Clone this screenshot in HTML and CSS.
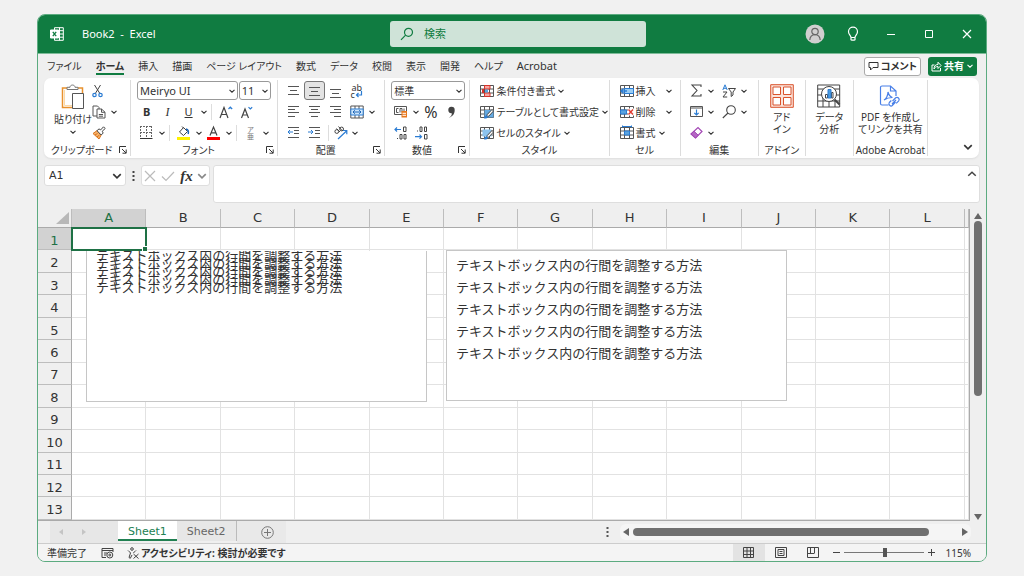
FILE: index.html
```html
<!DOCTYPE html>
<html lang="ja">
<head>
<meta charset="utf-8">
<title>Book2 - Excel</title>
<link rel="stylesheet" href="styles.css">
</head>
<body>
<svg class="defs" aria-hidden="true">
  <symbol id="chev" viewBox="0 0 8 8"><path d="M1.500 2.800 4 5.200 6.500 2.800" fill="none" stroke="currentColor" stroke-width="1.100"/></symbol>
  <symbol id="launch" viewBox="0 0 8 8"><path d="M.5 7V.5H7M3 3l4 4M7.200 3.500v3.700H3.500" fill="none" stroke="currentColor"/></symbol>
  <symbol id="cells" viewBox="0 0 14 14"><path d="M.5 1.500h13v11H.5zM.5 5h13M.5 9h13M4.500 1.500v11M9.500 1.500v11" fill="#fff" stroke="#555"/></symbol>
</svg>
<div class="window">
  <header class="titlebar">
    <div class="title">
      <svg width="14" height="14" viewBox="0 0 14 14" fill="none" stroke="#fff"><path d="M4.500 3V.7h8.800v12.600H4.500V11M8.500 3.700h4.800M8.500 7h4.800M8.500 10.200h4.800M9.500.7v12.600"/><path d="M.5 3h8v8h-8z" fill="#fff"/><path d="m2.800 4.800 3.400 4.400m0-4.400L2.800 9.200" stroke="#107c41" stroke-width="1.300"/></svg>
      <span>Book2&nbsp; -&nbsp; Excel</span>
    </div>
    <label class="search">
      <svg width="14" height="14" viewBox="0 0 14 14" fill="none" stroke="#107c41" stroke-width="1.200"><circle cx="8.500" cy="5.300" r="4"/><path d="M5.600 8.200 1 12.800"/></svg>
      <input type="text" placeholder="検索" aria-label="検索">
    </label>
    <div class="controls">
      <button aria-label="アカウント"><svg width="20" height="20" viewBox="0 0 20 20"><circle cx="10" cy="10" r="9.500" fill="#d0cfcf"/><g fill="none" stroke="#666" stroke-width="1.200"><circle cx="10" cy="7.500" r="3.200"/><path d="M4.800 16c.4-7 10-7 10.400 0"/></g></svg></button>
      <button aria-label="ヒント"><svg width="12" height="16" viewBox="0 0 12 16" fill="none" stroke="#fff" stroke-width="1.200"><path d="M4 11.500C4 9.500 1.500 8.500 1.500 5.700a4.500 4.500 0 0 1 9 0C10.500 8.500 8 9.500 8 11.500zM4.200 14.200h3.600M4 11.500v2.700M8 11.500v2.700"/></svg></button>
      <button aria-label="最小化"><svg width="10" height="10" stroke="#fff"><path d="M1 5.500h8"/></svg></button>
      <button aria-label="最大化"><svg width="10" height="10" fill="none" stroke="#fff"><path d="M1.500 1.500h7v7h-7z"/></svg></button>
      <button aria-label="閉じる"><svg width="10" height="10" stroke="#fff" stroke-width="1.200"><path d="m1 1 8 8M9 1 1 9"/></svg></button>
    </div>
  </header>

  <nav class="menu">
    <button>ファイル</button><button class="current">ホーム</button><button>挿入</button><button>描画</button><button>ページ レイアウト</button><button>数式</button><button>データ</button><button>校閲</button><button>表示</button><button>開発</button><button>ヘルプ</button><button class="latin">Acrobat</button>
    <div class="share">
      <button class="comment"><svg width="11" height="10" viewBox="0 0 11 10" fill="none" stroke="#333"><path d="M1 1.500h9v5H5L2.500 9V6.500H1z"/></svg>コメント</button>
      <button class="primary"><svg width="11" height="11" viewBox="0 0 11 11" fill="none" stroke="#fff"><path d="M3.500 4H1v6h8.500V7M3 8c0-3 1.500-4.500 4-4.500V1.200l3 3.300-3 3V5.500C5 5.500 3.800 6.500 3 8z"/></svg>共有<svg width="8" height="8"><use href="#chev"/></svg></button>
    </div>
  </nav>

  <section class="ribbon">
    <div class="group">
      <div class="body clipboard">
        <button class="big"><svg width="24" height="26" viewBox="0 0 24 26" fill="none"><path d="M6 4H1.500v19.500H11M17 4h4.500v5" stroke="#e8912d" stroke-width="1.500"/><path d="M3.500 6v15.500H11" stroke="#fbd9a5"/><path d="M6 5.500V3.300h3C9 .3 14 .3 14 3.300h3v2.200z" fill="#fff" stroke="#777"/><path d="M11.500 9.500h11v15h-11z" fill="#fff" stroke="#555"/></svg><span>貼り付け</span><svg width="8" height="8"><use href="#chev"/></svg></button>
        <div class="stack">
          <button aria-label="切り取り"><svg width="12" height="14" viewBox="0 0 12 14" fill="none"><path d="m2.500 1 5.700 9M8.500 1 3 10" stroke="#444"/><g stroke="#2b7cd3" stroke-width="1.200"><circle cx="2.500" cy="11" r="1.700"/><circle cx="8.500" cy="11" r="1.700"/></g></svg></button>
          <button aria-label="コピー" class="pair"><svg width="14" height="14" viewBox="0 0 14 14" fill="#fff" stroke="#555"><path d="M1 1h4.500l1.500 1.500V11H1z"/><path d="M5 4h4.500L13 7.200V13H5zM9.500 4v3.300H13M6.800 9.500H11M6.800 11.200H11"/></svg><svg width="8" height="8"><use href="#chev"/></svg></button>
          <button aria-label="書式のコピー"><svg width="14" height="14" viewBox="0 0 14 14"><path d="m1 7.500 4-2.800L9.200 9 7 13z" fill="#f6b26b" stroke="#d9731a"/><path d="m3 9 2.500-1.500M5 11l2.500-2" stroke="#d9731a"/><path d="m5 4.700 2-1.800 1.700 1L11.500.8l1.700 1.700-3 2.800 1 1.700-2 2z" fill="#fff" stroke="#444"/></svg></button>
        </div>
      </div>
      <div class="caption"><span>クリップボード</span><svg width="8" height="8"><use href="#launch"/></svg></div>
    </div>

    <div class="group">
      <div class="body rows">
        <div class="row">
          <span class="combo name"><select aria-label="フォント"><option>Meiryo UI</option></select><svg width="8" height="8"><use href="#chev"/></svg></span>
          <span class="combo size"><select aria-label="サイズ"><option>11</option></select><svg width="8" height="8"><use href="#chev"/></svg></span>
        </div>
        <div class="row">
          <button class="tool"><b>B</b></button><button class="tool"><i>I</i></button><button class="tool"><u>U</u></button><button class="drop" aria-label="下線"><svg width="8" height="8"><use href="#chev"/></svg></button><span class="bar"></span>
          <button class="tool" aria-label="拡大"><svg width="14" height="14" viewBox="0 0 14 14" fill="none"><path d="M1 13 5 2.500 9 13M2.400 9.500h5.200" stroke="#444" stroke-width="1.200"/><path d="m9.500 4 1.800-1.800L13.200 4" stroke="#2b7cd3" stroke-width="1.200"/></svg></button>
          <button class="tool" aria-label="縮小"><svg width="14" height="14" viewBox="0 0 14 14" fill="none"><path d="M1.500 13 5 4l3.500 9M2.800 10h4.500" stroke="#444" stroke-width="1.200"/><path d="M8.500 2.200 10.300 4l1.900-1.800" stroke="#2b7cd3" stroke-width="1.200"/></svg></button>
        </div>
        <div class="row">
          <button class="tool" aria-label="罫線"><svg width="13" height="13" viewBox="0 0 13 13" fill="none" stroke="#666"><path d="M.5 0v12M6.500 0v12M11.500 0v12M0 .5h12M0 6.500h12" stroke-dasharray="2 1"/><path d="M0 12.500h12.500" stroke="#333"/></svg></button><button class="drop" aria-label="罫線の種類"><svg width="8" height="8"><use href="#chev"/></svg></button><span class="bar"></span>
          <button class="tool" aria-label="塗りつぶし"><svg width="14" height="14" viewBox="0 0 14 14"><path d="m2.500 6 4-4.500 4 4-4 4zM5 .5l2 2" fill="#fff" stroke="#444"/><path d="M9 3c2 .5 2.800 2.500 2.200 5" fill="none" stroke="#1e66b8" stroke-width="1.500"/><path d="M0 11h13v3H0z" fill="#fff200"/></svg></button><button class="drop" aria-label="塗りつぶしの色"><svg width="8" height="8"><use href="#chev"/></svg></button>
          <button class="tool" aria-label="文字色"><svg width="14" height="14" viewBox="0 0 14 14"><path d="M3 9.500 6.500 1 10 9.500M4.200 6.800h4.600" fill="none" stroke="#444" stroke-width="1.200"/><path d="M0 11h13v3H0z" fill="#f00"/></svg></button><button class="drop" aria-label="フォントの色"><svg width="8" height="8"><use href="#chev"/></svg></button><span class="bar"></span>
          <button class="tool ruby" aria-label="ふりがな"><span>ア</span><span>亜</span></button><button class="drop" aria-label="ふりがなの設定"><svg width="8" height="8"><use href="#chev"/></svg></button>
        </div>
      </div>
      <div class="caption"><span>フォント</span><svg width="8" height="8"><use href="#launch"/></svg></div>
    </div>

    <div class="group">
      <div class="body rows">
        <div class="row">
          <button class="tool" aria-label="上揃え"><svg width="13" height="14" stroke="#555"><path d="M1 2.500h11M3 6.500h7M1 10.500h11"/></svg></button>
          <button class="tool selected" aria-label="上下中央揃え"><svg width="13" height="14" stroke="#555"><path d="M1 3.500h11M3 7.500h7M1 11.500h11"/></svg></button>
          <button class="tool" aria-label="下揃え"><svg width="13" height="14" stroke="#555"><path d="M1 5.500h11M3 9.500h7M1 13.500h11"/></svg></button>
          <button class="tool wrap" aria-label="折り返して全体を表示"><span>ab</span><span>c</span><svg width="8" height="7" viewBox="0 0 8 7" fill="none" stroke="#2b7cd3" stroke-width="1.200"><path d="M6.500 0v4H1.500M3.500 2 1.500 4l2 2"/></svg></button>
        </div>
        <div class="row">
          <button class="tool" aria-label="左揃え"><svg width="13" height="13" stroke="#555"><path d="M1 1.500h11M1 4.500h7M1 7.500h11M1 11.500h7"/></svg></button>
          <button class="tool" aria-label="中央揃え"><svg width="13" height="13" stroke="#555"><path d="M1 1.500h11M3 4.500h7M1 7.500h11M3 11.500h7"/></svg></button>
          <button class="tool" aria-label="右揃え"><svg width="13" height="13" stroke="#555"><path d="M1 1.500h11M5 4.500h7M1 7.500h11M5 11.500h7"/></svg></button>
          <button class="tool" aria-label="セルを結合"><svg width="14" height="14" viewBox="0 0 14 14" fill="none"><path d="M.8 1h12.400v12H.8zM5 1v3M9 1v3M5 10v3M9 10v3" stroke="#555"/><path d="M.8 4h12.400v6H.8z" fill="#cfe6fa" stroke="#2b7cd3"/><path d="M3 7h8M4.800 5.200 3 7l1.800 1.800M9.200 5.200 11 7 9.200 8.800" stroke="#1e66b8"/></svg></button><button class="drop" aria-label="結合の種類"><svg width="8" height="8"><use href="#chev"/></svg></button>
        </div>
        <div class="row">
          <button class="tool" aria-label="インデントを減らす"><svg width="13" height="13" fill="none"><path d="M1 1.500h11M7 4.500h5M7 7.500h5M1 11.500h11" stroke="#555"/><path d="M6 6H1M3 4 1 6l2 2" stroke="#2b7cd3"/></svg></button>
          <button class="tool" aria-label="インデントを増やす"><svg width="13" height="13" fill="none"><path d="M1 1.500h11M7 4.500h5M7 7.500h5M1 11.500h11" stroke="#555"/><path d="M0 6h5M3 4l2 2-2 2" stroke="#2b7cd3"/></svg></button><span class="bar"></span>
          <button class="tool slant" aria-label="方向"><svg width="14" height="14" viewBox="0 0 14 14" fill="none"><g stroke="#444"><circle cx="2.800" cy="5.500" r="1.900"/><path d="m2.500 2.500 3.500 3.500M4.500.5l4 4.500"/><circle cx="7.600" cy="3" r="1.900"/></g><path d="m4 13 8.500-8M9 4.500h3.800v3.800" stroke="#2b7cd3" stroke-width="1.200"/></svg></button><button class="drop" aria-label="方向の種類"><svg width="8" height="8"><use href="#chev"/></svg></button>
        </div>
      </div>
      <div class="caption"><span>配置</span><svg width="8" height="8"><use href="#launch"/></svg></div>
    </div>

    <div class="group">
      <div class="body rows">
        <div class="row"><span class="combo fmt"><select aria-label="表示形式"><option>標準</option></select><svg width="8" height="8"><use href="#chev"/></svg></span></div>
        <div class="row">
          <button class="tool" aria-label="通貨"><svg width="14" height="13" viewBox="0 0 14 13" fill="none"><path d="M.5 1.500h12v8H.5z" stroke="#555"/><path d="M4.500 3.500h-2v4h2M6 7.500v-4h2v4M10 3.500v3" stroke="#555"/><path d="M7.500 6h5.500v6.500H7.500z" fill="#e8781e"/><path d="M8.500 8.300h3.500M8.500 10.300h3.500" stroke="#fff"/></svg></button><button class="drop" aria-label="通貨の種類"><svg width="8" height="8"><use href="#chev"/></svg></button>
          <button class="tool sign">%</button>
          <button class="tool" aria-label="桁区切り"><svg width="9" height="12" viewBox="0 0 9 12"><path d="M2 11.500C4 10.500 5 9 4.800 7.200A3.200 3.200 0 1 1 7.700 4C7.700 8 5.500 10.800 2 11.500z" fill="#444"/></svg></button>
        </div>
        <div class="row">
          <button class="tool" aria-label="小数点以下を増やす"><svg width="14" height="14" viewBox="0 0 14 14" fill="none" stroke="#444"><path d="M9.500 1h2.500v4.500H9.500zM6 8.500h2V13H6zM10 8.500h2V13h-2zM3.500 12v1"/><path d="M7 3.500H1M3 1.500l-2 2 2 2" stroke="#2b7cd3" stroke-width="1.200"/></svg></button>
          <button class="tool" aria-label="小数点以下を減らす"><svg width="14" height="14" viewBox="0 0 14 14" fill="none" stroke="#444"><path d="M5 1h2v4.500H5zM9.500 1h2v4.500h-2zM2.500 4.500v1M9.500 8.500H12V13H9.500z"/><path d="M0 10.700h6.500M4.500 8.700l2 2-2 2" stroke="#2b7cd3" stroke-width="1.200"/></svg></button>
        </div>
      </div>
      <div class="caption"><span>数値</span><svg width="8" height="8"><use href="#launch"/></svg></div>
    </div>

    <div class="group">
      <div class="body rows">
        <button class="item"><svg width="14" height="14" viewBox="0 0 14 14"><use href="#cells"/><path d="M4.500 1.500H10V5H4.500zM4.500 9H10v3.500H4.500z" fill="#f6a6a0" stroke="#d8322a"/><path d="M3 5v4" stroke="#d8322a" stroke-width="2"/><path d="M5 5.500h3v3H5z" fill="#5aa4e0"/></svg>条件付き書式<svg width="8" height="8"><use href="#chev"/></svg></button>
        <button class="item"><svg width="14" height="14" viewBox="0 0 14 14"><use href="#cells"/><path d="M4.500 5h9v7.500h-9z" fill="#63a9e2"/><path d="m6.500 12.500.6-2.800L12 4.500l1.500 1.500-4.600 5z" fill="#fff" stroke="#444"/><path d="M4 13.500c.5-3 2-3.500 3.800-2.500.2 2-1.500 2.800-3.800 2.500z" fill="#2b7cd3"/></svg>テーブルとして書式設定<svg width="8" height="8"><use href="#chev"/></svg></button>
        <button class="item"><svg width="14" height="14" viewBox="0 0 14 14"><use href="#cells"/><path d="M2.500 3.500h9v7h-9z" fill="#8cc3ee"/><path d="m6.500 12.500.6-2.800L12 4.500l1.500 1.500-4.600 5z" fill="#fff" stroke="#444"/><path d="M4 13.500c.5-3 2-3.500 3.800-2.500.2 2-1.500 2.800-3.800 2.500z" fill="#2b7cd3"/></svg>セルのスタイル<svg width="8" height="8"><use href="#chev"/></svg></button>
      </div>
      <div class="caption"><span>スタイル</span></div>
    </div>

    <div class="group">
      <div class="body rows">
        <button class="item split"><svg width="14" height="14" viewBox="0 0 14 14"><use href="#cells"/><path d="M4.500 4.500h9v5h-9z" fill="#9bcdf3" stroke="#2b7cd3"/><path d="M7 7H1M3.500 4.500 1 7l2.500 2.500" fill="none" stroke="#2b7cd3" stroke-width="1.300"/></svg>挿入<svg width="8" height="8"><use href="#chev"/></svg></button>
        <button class="item split"><svg width="14" height="14" viewBox="0 0 14 14"><use href="#cells"/><path d="M.5 5h6v4h-6z" fill="#5aa4e0" stroke="#2b7cd3"/><path d="M8 3.500h6v7H8z" fill="#fff"/><path d="m8.500 4.500 4.500 5m0-5-4.500 5" stroke="#e03a2f" stroke-width="1.400"/></svg>削除<svg width="8" height="8"><use href="#chev"/></svg></button>
        <button class="item"><svg width="14" height="14" viewBox="0 0 14 14"><use href="#cells"/><path d="M4.500 5h5v4h-5z" fill="#5aa4e0" stroke="#2b7cd3"/><path d="M2.500.5h9M2.500-.5v2M11.500-.5v2" stroke="#2b7cd3"/></svg>書式<svg width="8" height="8"><use href="#chev"/></svg></button>
      </div>
      <div class="caption"><span>セル</span></div>
    </div>

    <div class="group">
      <div class="body rows edit">
        <div class="row">
          <button class="tool" aria-label="合計"><svg width="13" height="13" viewBox="0 0 13 13" fill="none" stroke="#444" stroke-width="1.100"><path d="M11 3V1H2l5 5.500L2 12h9v-2"/></svg></button><button class="drop" aria-label="関数"><svg width="8" height="8"><use href="#chev"/></svg></button>
          <button class="tool" aria-label="並べ替えとフィルター"><svg width="14" height="14" viewBox="0 0 14 14" fill="none"><path d="M.8 6 3 .8 5.200 6M1.500 4.300h3" stroke="#2b7cd3"/><path d="M1 8h4l-4 5h4.200" stroke="#444"/><path d="M6.500 4.500h7L11 8v3L9.200 12.500V8z" stroke="#444"/></svg></button><button class="drop" aria-label="並べ替え"><svg width="8" height="8"><use href="#chev"/></svg></button>
        </div>
        <div class="row">
          <button class="tool" aria-label="フィル"><svg width="13" height="13" viewBox="0 0 13 13" fill="none"><path d="M.5 1.500h12v10H.5zM.5 3h12" stroke="#555"/><path d="M6.500 4.500v5.500M4.300 7.800l2.200 2.200 2.200-2.200" stroke="#2b7cd3" stroke-width="1.200"/></svg></button><button class="drop" aria-label="フィルの種類"><svg width="8" height="8"><use href="#chev"/></svg></button>
          <button class="tool" aria-label="検索と選択"><svg width="14" height="14" viewBox="0 0 14 14" fill="none" stroke="#444" stroke-width="1.100"><circle cx="9" cy="5" r="4.300"/><path d="M6 8 .8 13"/></svg></button><button class="drop" aria-label="検索の種類"><svg width="8" height="8"><use href="#chev"/></svg></button>
        </div>
        <div class="row">
          <button class="tool" aria-label="クリア"><svg width="13" height="13" viewBox="0 0 13 13"><path d="m1 8 7-6.500L12 5.500 5.500 12z" fill="#fff" stroke="#a346b5" stroke-width="1.200"/><path d="m1 8 3-2.800 4.200 4L5.500 12z" fill="#b568c4" stroke="#a346b5"/></svg></button><button class="drop" aria-label="クリアの種類"><svg width="8" height="8"><use href="#chev"/></svg></button>
        </div>
      </div>
      <div class="caption"><span>編集</span></div>
    </div>

    <div class="group">
      <div class="body"><button class="big"><svg width="24" height="24" viewBox="0 0 24 24" fill="#fff" stroke="#d9532c"><path d="M.7.7h22.600v22.600H.7z" fill="#fbe3da"/><path d="M3 3h7.500v7.500H3zM13.500 3H21v7.500h-7.500zM3 13.500h7.500V21H3zM13.500 13.500H21V21h-7.500z"/></svg><span>アド<br>イン</span></button></div>
      <div class="caption"><span>アドイン</span></div>
    </div>
    <div class="group">
      <div class="body"><button class="big"><svg width="24" height="24" viewBox="0 0 24 24" fill="none" stroke="#444"><path d="M.7 1h22v22H.7zM.7 5h22M.7 11h22M.7 17h22M6 11v12M12 17v6M18 17v6"/><circle cx="12" cy="10" r="7.500" fill="#fff"/><path d="m17.500 15.500 5 5" stroke-width="2"/><path d="M8.500 14v-3.500h2V14zM14.500 14V8.500h1.500V14z"/><path d="M11 14V5.500h3V14z" fill="#4a9be0" stroke="#2b7cd3"/></svg><span>データ<br>分析</span></button></div>
      <div class="caption"></div>
    </div>
    <div class="group">
      <div class="body"><button class="big"><svg width="22" height="24" viewBox="0 0 22 24" fill="none" stroke="#4a80e8" stroke-width="1.200"><path d="M9.500 21H3a1.500 1.500 0 0 1-1.500-1.500v-16A1.500 1.500 0 0 1 3 2h8.500L17 7v5M11.500 2v5H17"/><path d="M5 16c2-1 4-4.500 4-8 1 3.500 2 5 4.500 5.500C10 13.500 7 14.500 5 16z"/><path d="m13.500 17 3.200-3.200c2-1.500 4.500 1 3 3l-2.500 2.500M16.500 18l-3.200 3.500c-1.500 1.500-4.500-.8-3-3l2-2M13 20l4-4"/></svg><span>PDF を作成し<br>てリンクを共有</span></button></div>
      <div class="caption"><span>Adobe Acrobat</span></div>
    </div>
    <button class="collapse" aria-label="リボンを折りたたむ"><svg width="12" height="12"><use href="#chev"/></svg></button>
  </section>

  <section class="formula">
    <span class="combo cellname"><select aria-label="名前ボックス"><option>A1</option></select><svg width="12" height="12"><use href="#chev"/></svg></span>
    <svg class="dots" width="3" height="10" viewBox="0 0 3 10"><path d="M1.500 0v10" stroke="#444" stroke-width="2" stroke-dasharray="2 2"/></svg>
    <div class="fx">
      <button aria-label="キャンセル"><svg width="12" height="12" stroke="#bbb" stroke-width="1.200"><path d="m1 1 10 10M11 1 1 11"/></svg></button>
      <button aria-label="入力"><svg width="14" height="12" fill="none" stroke="#bbb" stroke-width="1.200"><path d="m1 6.500 4 4L13 2"/></svg></button>
      <button class="fn"><i>fx</i></button>
      <button class="drop" aria-label="関数の履歴"><svg width="12" height="12"><use href="#chev"/></svg></button>
    </div>
    <label class="entry"><textarea aria-label="数式バー"></textarea><svg width="12" height="12" viewBox="0 0 8 8"><path d="M1.500 5.200 4 2.800l2.500 2.400" fill="none" stroke="#444"/></svg></label>
  </section>

  <main class="work">
    <div class="sheet">
      <table>
        <colgroup><col class="rowhead"><col span="12"><col class="rest"></colgroup>
        <thead><tr><th class="corner"><svg width="14" height="12"><path d="M14 0v12H1z" fill="#b8b8b8"/></svg></th><th class="on">A<th>B<th>C<th>D<th>E<th>F<th>G<th>H<th>I<th>J<th>K<th>L<th></tr></thead>
        <tbody>
        <tr><th class="on">1<td class="active"><td><td><td><td><td><td><td><td><td><td><td><td></tr>
        <tr><th>2<td><td><td><td><td><td><td><td><td><td><td><td><td></tr>
        <tr><th>3<td><td><td><td><td><td><td><td><td><td><td><td><td></tr>
        <tr><th>4<td><td><td><td><td><td><td><td><td><td><td><td><td></tr>
        <tr><th>5<td><td><td><td><td><td><td><td><td><td><td><td><td></tr>
        <tr><th>6<td><td><td><td><td><td><td><td><td><td><td><td><td></tr>
        <tr><th>7<td><td><td><td><td><td><td><td><td><td><td><td><td></tr>
        <tr><th>8<td><td><td><td><td><td><td><td><td><td><td><td><td></tr>
        <tr><th>9<td><td><td><td><td><td><td><td><td><td><td><td><td></tr>
        <tr><th>10<td><td><td><td><td><td><td><td><td><td><td><td><td></tr>
        <tr><th>11<td><td><td><td><td><td><td><td><td><td><td><td><td></tr>
        <tr><th>12<td><td><td><td><td><td><td><td><td><td><td><td><td></tr>
        <tr><th>13<td><td><td><td><td><td><td><td><td><td><td><td><td></tr>
        </tbody>
      </table>
      <div class="textbox tight"><p>テキストボックス内の行間を調整する方法</p><p>テキストボックス内の行間を調整する方法</p><p>テキストボックス内の行間を調整する方法</p><p>テキストボックス内の行間を調整する方法</p><p>テキストボックス内の行間を調整する方法</p></div>
      <div class="textbox loose"><p>テキストボックス内の行間を調整する方法</p><p>テキストボックス内の行間を調整する方法</p><p>テキストボックス内の行間を調整する方法</p><p>テキストボックス内の行間を調整する方法</p><p>テキストボックス内の行間を調整する方法</p></div>
    </div>
    <div class="vscroll">
      <svg width="8" height="6"><path d="M4 0 8 6H0z" fill="#666"/></svg>
      <div class="track"><div class="thumb"></div></div>
      <svg width="8" height="6"><path d="M4 6 8 0H0z" fill="#666"/></svg>
    </div>
  </main>

  <div class="tabs">
    <div class="arrows"><svg width="4" height="6"><path d="M4 0v6L0 3z" fill="#c4c4c4"/></svg><svg width="4" height="6"><path d="M0 0v6l4-3z" fill="#c4c4c4"/></svg></div>
    <button class="tab current">Sheet1</button>
    <button class="tab">Sheet2</button>
    <button class="add" aria-label="新しいシート"><svg width="13" height="13" fill="none" stroke="#777"><circle cx="6.500" cy="6.500" r="5.800"/><path d="M6.500 3v7M3 6.500h7"/></svg></button>
    <svg class="dots" width="3" height="10" viewBox="0 0 3 10"><path d="M1.500 0v10" stroke="#555" stroke-width="2" stroke-dasharray="2 2"/></svg>
    <div class="hscroll">
      <svg width="6" height="8"><path d="M6 0v8L0 4z" fill="#666"/></svg>
      <div class="track"><div class="thumb"></div></div>
      <svg width="6" height="8"><path d="M0 0v8l6-4z" fill="#666"/></svg>
    </div>
  </div>

  <footer class="status">
    <span>準備完了</span>
    <svg class="macro" width="13" height="12" viewBox="0 0 13 12" fill="none" stroke="#444"><path d="M5 10.500H1V1.500h11V5M1 3.500h11M3 6h3M3 8h2"/><circle cx="8.800" cy="8" r="3"/><circle cx="8.800" cy="8" r="1"/></svg>
    <button class="access"><svg width="12" height="12" viewBox="0 0 12 12" fill="none" stroke="#444"><circle cx="5" cy="2" r="1.300"/><path d="M1 3.500c1 1.500 2.500 1.500 2.500 2.500L2 10.500l1.300.8L5 8M9 3.500C8 5 6.500 5 6.500 6M6.500 7l5 4.500m0-4.500-5 4.500"/></svg>アクセシビリティ: 検討が必要です</button>
    <div class="views">
      <button class="selected" aria-label="標準"><svg width="12" height="12" fill="none" stroke="#444"><path d="M.5.5h10v10H.5zM4 .5v10M7.500.5v10M.5 4h10M.5 7.500h10"/></svg></button>
      <button aria-label="ページ レイアウト"><svg width="12" height="12" fill="none" stroke="#444"><path d="M.5.5h11v10H.5zM3 2.500h6v6H3zM4.500 4.500h3M4.500 6.500h3"/></svg></button>
      <button aria-label="改ページ プレビュー"><svg width="12" height="12" fill="none" stroke="#444"><path d="M.5.500h11v10H.5zM3.500.5v5.500M7.500.5v5.500M.5 6.500h7"/></svg></button>
    </div>
    <div class="zoom">
      <button aria-label="縮小"><svg width="7" height="7" stroke="#444"><path d="M0 3.500h7"/></svg></button>
      <input type="range" min="0" max="100" value="52" aria-label="ズーム">
      <button aria-label="拡大"><svg width="7" height="7" stroke="#444"><path d="M0 3.500h7M3.500 0v7"/></svg></button>
      <span>115%</span>
    </div>
  </footer>
</div>
</body>
</html>
```

FILE: styles.css
```css
* { box-sizing: border-box; }
body {
  margin: 0;
  height: 100vh;
  padding: 14px 37px;
  background: #f1f1f1;
  color: #333;
  font: 10px/12px "Noto Sans", "Noto Sans CJK JP", sans-serif;
  font-feature-settings: "palt";
}
.defs { position: absolute; width: 0; height: 0; }
svg { flex: none; display: block; overflow: visible; }
button, select, input, textarea {
  margin: 0; padding: 0; border: 0; background: none;
  font: inherit; font-feature-settings: inherit; color: inherit; appearance: none; outline: none;
}
button { display: flex; align-items: center; justify-content: center; white-space: nowrap; }
.window {
  height: 100%; display: flex; flex-direction: column;
  border: 1px solid #5cab80; border-radius: 8px; overflow: hidden; background: #efefef;
}

/* title bar */
.titlebar {
  flex: none; height: 39px; display: grid; grid-template-columns: 1fr 256px 1fr;
  align-items: center; background: #107c41; color: #fff; border-bottom: 1px solid #7dbb98;
}
.title { display: flex; align-items: center; gap: 18px; padding-left: 12px; font-size: 11px; }
.search {
  height: 26px; margin-left: 6px; width: 256px; display: flex; align-items: center; gap: 10px; padding: 0 10px;
  border-radius: 3px; background: #cfe3d8;
}
.search input { flex: 1; min-width: 0; font-size: 11px; }
.search input::placeholder { color: #107c41; opacity: 1; }
.controls { display: flex; justify-content: flex-end; }
.controls button { width: 38px; }

/* ribbon tabs */
.menu { flex: none; height: 24px; display: flex; align-items: center; gap: 14px; padding: 0 9px; }
.menu button { height: 18px; }
.menu .current { font-weight: bold; border-bottom: 2px solid #107c41; padding-top: 2px; }
.latin { font-size: 11px; }
.share { flex: 1; display: flex; justify-content: flex-end; gap: 7px; }
.share button { height: 19px; padding: 0 3px; gap: 2px; border-radius: 3px; font-weight: bold; }
.comment { border: 1px solid #aaa; background: #fff; }
.primary { background: #107c41; color: #fff; }

/* ribbon */
.ribbon {
  flex: none; margin: 0 7px 0 6px; padding: 2px 0 0; min-height: 80px; border-radius: 7px; background: #fff;
  box-shadow: 0 1px 2px #ddd;
  display: grid; grid-template-columns: 87fr 147fr 107fr 85fr 139fr 71fr 78fr 47fr 48fr 74fr 51fr;
}
.group { min-width: 0; display: flex; flex-direction: column; border-right: 1px solid #dcdcdc; margin-bottom: 2px; }
.body { flex: 1; display: flex; justify-content: center; }
.rows { flex-direction: column; justify-content: flex-start; padding-left: 5px; }
.row, .item { height: 21px; display: flex; align-items: center; justify-content: flex-start; }
.item { gap: 2px; padding-left: 5px; }
.split > svg:last-child { margin-left: 7px; }
.caption { height: 12px; display: flex; align-items: center; justify-content: center; }
.caption span { flex: 1; text-align: center; white-space: nowrap; min-width: 0; }
.caption svg { margin-right: 3px; }
.clipboard { justify-content: space-between; padding: 0 12px 0 10px; }
.big { flex-direction: column; justify-content: flex-start; padding-top: 4px; gap: 3px; text-align: center; line-height: 12px; }
.stack button { height: 21px; }
.stack { display: flex; flex-direction: column; align-items: flex-start; }
.pair { gap: 4px; }
.tool { width: 21px; height: 19px; }
.tool b, .tool i, .tool u { font-size: 11px; }
.tool i, .fn i { font-family: "Liberation Serif", serif; font-size: 12px; }
.drop { width: 9px; }
.bar { width: 1px; height: 16px; margin: 0 3px; background: #ddd; }
.selected { background: #e3e3e3; }
.tool.selected { border: 1px solid #777; border-radius: 3px; }
.slant { width: 18px; }
.ruby { flex-direction: column; font-size: 7px; line-height: 7px; color: #777; }
.wrap { display: grid; grid-template-columns: auto auto; justify-content: center; align-content: center; font-size: 9px; line-height: 7px; }
.wrap span:first-child { grid-column: 1 / 3; }
.sign { font-size: 16px; }
.edit { padding-left: 5px; }
.edit .drop { margin-right: 3px; }
.combo { display: grid; align-items: center; height: 19px; border: 1px solid #999; border-radius: 3px; background: #fff; }
.combo select, .combo svg { grid-area: 1 / 1; }
.combo select { padding-left: 2px; width: 100%; }
.combo svg { justify-self: end; margin-right: 1px; pointer-events: none; }
.name { flex: 100; margin-left: 1px; font-size: 11px; }
.size { flex: 31; margin: 0 6px 0 1px; font-size: 11px; }
.fmt { flex: 1; margin: 0 4px 0 1px; }
.collapse { align-self: end; justify-self: end; padding: 0 5px 5px; }

/* formula bar */
.formula { flex: none; display: flex; align-items: flex-start; margin: 7px 6px 6px; }
.cellname, .fx { height: 21px; border: 1px solid #dedede; border-radius: 3px; background: #fff; }
.cellname { width: 82px; font: 11px "DejaVu Sans", sans-serif; }
.cellname svg { margin-right: 2px; }
.cellname select { padding-left: 4px; }
.formula .dots { margin: 6px; }
.fx { width: 69px; display: flex; align-items: center; justify-content: space-around; color: #888; }
.fn i { font-size: 15px; font-weight: bold; color: #333; }
.entry { flex: 1; display: flex; height: 38px; margin-left: 3px; background: #fff; border: 1px solid #dedede; border-radius: 3px; }
.entry textarea { flex: 1; min-width: 0; resize: none; }
.entry svg { margin: 2px 1px; }

/* worksheet */
.work { flex: 1; min-height: 0; display: flex; }
.sheet { flex: 1; min-width: 0; position: relative; border-right: 1px solid #aaa; border-bottom: 1px solid #aaa; }
table { width: 100%; height: 100%; table-layout: fixed; border-spacing: 0; background: #fff; font: 13px/16px "DejaVu Sans", sans-serif; }
.rowhead { width: 34px; }
.rest { width: 4px; }
th, td { padding: 0; border: 0 solid #e2e2e2; border-width: 0 1px 1px 0; }
th { font-weight: normal; background: #efefef; border-color: #bdbdbd; }
thead th { height: 19px; border-bottom-color: #aaa; }
tbody th { padding-top: 4px; border-right-color: #aaa; }
th.on { background: #d2d2d2; color: #1e7145; }
.corner svg { margin-left: 17px; }
.active { position: relative; outline: 2px solid #1e7145; outline-offset: -1px; }
.active::after {
  content: ""; position: absolute; right: -2px; bottom: -2px; width: 4px; height: 4px;
  background: #1e7145; border: solid #fff; border-width: 1px 0 0 1px; box-sizing: content-box;
}
.textbox {
  position: absolute; width: 341px; height: 151px; background: #fff; border: 1px solid #c6c6c6; overflow: hidden;
  padding: 0 9px; font: 13px "Noto Sans CJK JP", sans-serif; font-feature-settings: normal;
}
.textbox p { margin: 0; white-space: nowrap; }
.tight { left: 48px; top: 42px; line-height: 8px; border-top: 0; }
.loose { left: 408px; top: 41px; line-height: 22px; padding-top: 3px; }
.vscroll { width: 16px; display: flex; flex-direction: column; align-items: center; padding: 4px 0 1px; gap: 2px; }
.track { flex: 1; }
.vscroll .thumb { width: 8px; height: 60%; border-radius: 4px; background: #707070; }

/* sheet tabs */
.tabs { flex: none; height: 22px; display: flex; align-items: center; font: 11px "DejaVu Sans", sans-serif; }
.arrows { align-self: stretch; width: 68px; margin-left: 12px; display: flex; align-items: center; gap: 19px; padding-left: 9px; background: #e7e7e7; }
.tab { height: 20px; align-self: flex-start; padding: 0 10px; background: #e7e7e7; color: #666; border-right: 1px solid #bbb; }
.tab.current { background: #fff; color: #218052; border: 0; border-bottom: 2px solid #218052; padding-top: 2px; }
.add { align-self: stretch; padding: 0 12px 0 24px; background: #e9e9e9; }
.tabs .dots { margin-left: auto; margin-right: 11px; }
.hscroll { flex: 0 0 37%; display: flex; align-items: center; gap: 4px; padding: 4px 3px; margin-right: 15px; background: #f5f5f5; border-radius: 6px; }
.hscroll .thumb { width: 91%; height: 8px; border-radius: 4px; background: #707070; }

/* status bar */
.status { flex: none; height: 18px; display: flex; align-items: center; padding: 0 15px 0 9px; background: #f4f4f4; border-top: 1px solid #ccc; }
.macro { margin: 0 13px 0 14px; }
.access { gap: 2px; font-weight: bold; }
.views { display: flex; align-self: stretch; margin-left: auto; }
.views button { width: 32px; }
.zoom { display: flex; align-items: center; gap: 4px; margin-left: 4px; }
.zoom input { width: 80px; height: 10px; background: linear-gradient(#777, #777) center / 100% 1px no-repeat; }
.zoom input::-webkit-slider-thumb { appearance: none; width: 4px; height: 9px; background: #555; }
.zoom span { margin-left: 7px; }
```
